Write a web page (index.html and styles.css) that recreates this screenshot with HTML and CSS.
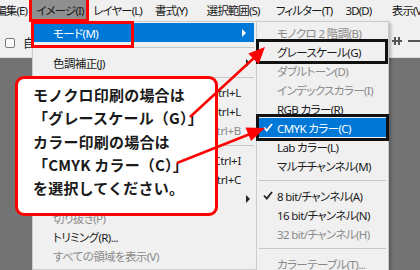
FILE: index.html
```html
<!DOCTYPE html>
<html lang="ja">
<head>
  <meta charset="UTF-8">
  <title>イメージ - モード</title>
  <link rel="stylesheet" href="styles.css">
</head>
<body>
  <!-- メニューバー -->
  <div class="menubar">
    <span class="mb-item first">編集(E)</span>
    <span class="mb-item active w56">イメージ(I)</span>
    <span class="mb-item w59">レイヤー(L)</span>
    <span class="mb-item w48">書式(Y)</span>
    <span class="mb-item w76">選択範囲(S)</span>
    <span class="mb-item w66">フィルター(T)</span>
    <span class="mb-item w43">3D(D)</span>
    <span class="mb-item w56">表示(V)</span>
  </div>

  <!-- オプションバー -->
  <div class="optbar">
    <span class="checkbox"></span>
    <span class="opt-label">自動選択</span>
    <svg class="opt-icons" width="30" height="10" viewBox="0 0 30 10">
      <rect x="2" y="4" width="10" height="2" fill="#555"/>
      <rect x="4" y="1" width="2" height="8" fill="#555"/>
      <rect x="8" y="1" width="2" height="8" fill="#555"/>
      <rect x="18" y="4" width="12" height="2" fill="#555"/>
    </svg>
  </div>

  <!-- イメージメニュー -->
  <div class="menu menu-main">
    <div class="mi hl"><span>モード(M)</span><span class="arrow"></span></div>
    <div class="sep"></div>
    <div class="mi"><span>色調補正(J)</span><span class="arrow"></span></div>
    <div class="sep"></div>
    <div class="mi"><span>自動トーン補正(N)</span><span class="key">Shift+Ctrl+L</span></div>
    <div class="mi"><span>自動コントラスト(U)</span><span class="key">Alt+Shift+Ctrl+L</span></div>
    <div class="mi dis"><span>自動カラー補正(O)</span><span class="key">Shift+Ctrl+B</span></div>
    <div class="sep"></div>
    <div class="mi"><span>画像解像度(I)...</span><span class="key">Alt+Ctrl+I</span></div>
    <div class="mi"><span>カンバスサイズ(S)...</span><span class="key">Alt+Ctrl+C</span></div>
    <div class="mi"><span>画像の回転(G)</span><span class="arrow"></span></div>
    <div class="mi dis"><span>切り抜き(P)</span></div>
    <div class="mi"><span>トリミング(R)...</span></div>
    <div class="mi dis"><span>すべての領域を表示(V)</span></div>
  </div>

  <!-- モードのサブメニュー -->
  <div class="menu menu-sub">
    <div class="mi dis"><span>モノクロ 2 階調(B)</span></div>
    <div class="mi"><span>グレースケール(G)</span></div>
    <div class="mi dis"><span>ダブルトーン(D)</span></div>
    <div class="mi dis"><span>インデックスカラー(I)</span></div>
    <div class="mi"><span>RGB カラー(R)</span></div>
    <div class="mi hl"><span class="chk"><svg width="10" height="9" viewBox="0 0 10 9"><path d="M1 4.5 L3.8 7.5 L9 1" fill="none" stroke="#fff" stroke-width="1.8"/></svg></span><span>CMYK カラー(C)</span></div>
    <div class="mi"><span>Lab カラー(L)</span></div>
    <div class="mi"><span>マルチチャンネル(M)</span></div>
    <div class="sep"></div>
    <div class="mi"><span class="chk"><svg width="10" height="9" viewBox="0 0 10 9"><path d="M1 4.5 L3.8 7.5 L9 1" fill="none" stroke="#222" stroke-width="1.8"/></svg></span><span>8 bit/チャンネル(A)</span></div>
    <div class="mi"><span>16 bit/チャンネル(N)</span></div>
    <div class="mi dis"><span>32 bit/チャンネル(H)</span></div>
    <div class="sep"></div>
    <div class="mi dis"><span>カラーテーブル(T)...</span></div>
  </div>

  <!-- 注釈の枠 -->
  <div class="mark mark-image"></div>
  <div class="mark mark-mode"></div>
  <div class="mark mark-black mark-gray"></div>
  <div class="mark mark-black mark-cmyk"></div>

  <div class="callout">
    <p>モノクロ印刷の場合は</p>
    <p>「グレースケール（G）」</p>
    <p>カラー印刷の場合は</p>
    <p>「CMYK カラー（C）」</p>
    <p>を選択してください。</p>
  </div>

  <svg class="arrows" width="420" height="270" viewBox="0 0 420 270">
    <line x1="190" y1="117" x2="255" y2="57" stroke="#f00" stroke-width="2.5"/>
    <polygon points="265,47 258.6,64.2 248.4,53.6" fill="#f00"/>
    <line x1="177" y1="163" x2="250" y2="134" stroke="#f00" stroke-width="2.5"/>
    <polygon points="265,128 251,141 245.5,127.5" fill="#f00"/>
  </svg>
</body>
</html>
```

FILE: styles.css
```css
/* 全体 */
* {
  box-sizing: border-box;
}

body {
  margin: 0;
  width: 420px;
  height: 270px;
  overflow: hidden;
  position: relative;
  background: #737373;
  font-family: "Noto Sans CJK JP", sans-serif;
  font-size: 12px;
  color: #1b1b1b;
}

p {
  margin: 0;
}

/* メニューバー */
.menubar {
  display: flex;
  height: 21px;
  line-height: 21px;
  background: #f0f0f0;
  font-family: "Noto Sans", "Noto Sans CJK JP", sans-serif;
  font-size: 11.5px;
  font-feature-settings: "palt";
  letter-spacing: -0.9px;
  white-space: nowrap;
}
.mb-item {
  flex: none;
  text-align: center;
}
.mb-item.first {
  width: 40px;
  margin-left: -8px;
  padding-right: 5px;
  text-align: right;
}
.mb-item.active {
  background: #8f8f8f;
}
.w43 { width: 43px; }
.w48 { width: 48px; }
.w56 { width: 56px; }
.w59 { width: 59px; }
.w66 { width: 66px; }
.w76 { width: 76px; }

/* オプションバー */
.optbar {
  display: flex;
  align-items: center;
  height: 37px;
  padding-top: 7px;
  background: #f0f0f0;
  border-bottom: 1px solid #dadada;
}
.checkbox {
  width: 10px;
  height: 10px;
  margin-left: 5px;
  border: 1px solid #7a7a7a;
  border-radius: 2px;
  background: #fbfbfb;
}
.opt-label {
  margin-left: 8px;
}
.opt-icons {
  margin-left: auto;
  margin-top: -4px;
}

/* ドロップダウンメニュー */
.menu {
  position: absolute;
  top: 21px;
  padding: 1px 0 4px;
  background: #f0f0f0;
  border: 1px solid #cccccc;
  box-shadow: 2px 2px 3px rgba(0, 0, 0, 0.25);
  font-family: "Noto Sans", "Noto Sans CJK JP", sans-serif;
  font-size: 11.5px;
  font-feature-settings: "palt";
  letter-spacing: -0.6px;
  white-space: nowrap;
}
.menu-main {
  left: 32px;
  width: 225px;
}
.menu-sub {
  left: 256px;
  width: 133px;
}

.mi {
  display: flex;
  align-items: center;
  height: 19px;
  padding: 0 15px 0 20px;
}
.mi.hl {
  margin-right: 2px;
  background: #0078d7;
  color: #fff;
}
.mi.dis {
  color: #8a8a8a;
}
.mi .key {
  margin-left: auto;
  letter-spacing: -0.3px;
}
.mi .arrow {
  margin-left: auto;
  margin-right: -9px;
  border-left: 4px solid #222;
  border-top: 4px solid transparent;
  border-bottom: 4px solid transparent;
}
.mi.hl .arrow {
  margin-right: -7px;
  border-left-color: #fff;
}
.mi .chk {
  display: flex;
  width: 14px;
  margin-left: -14px;
}

.sep {
  height: 1px;
  margin: 5px 2px;
  background: #c6c6c6;
}

/* 注釈の枠 */
.mark {
  position: absolute;
  border: 3px solid #f00;
}
.mark-image {
  left: 29px;
  top: -3px;
  width: 60px;
  height: 25px;
}
.mark-mode {
  left: 31px;
  top: 21px;
  width: 103px;
  height: 27px;
}
.mark-black {
  border-color: #111;
}
.mark-gray {
  left: 256px;
  top: 39px;
  width: 132px;
  height: 25px;
}
.mark-cmyk {
  left: 256px;
  top: 114px;
  width: 133px;
  height: 27px;
}

/* 吹き出し */
.callout {
  position: absolute;
  left: 15px;
  top: 76px;
  width: 203px;
  height: 140px;
  padding: 4px 0 0 15px;
  background: #fff;
  border: 3px solid #f00;
  border-radius: 9px;
  font-size: 15px;
  font-weight: 700;
  line-height: 23.3px;
  letter-spacing: 0.2px;
  color: #1a1a1a;
  white-space: nowrap;
}

.arrows {
  position: absolute;
  left: 0;
  top: 0;
}
```
